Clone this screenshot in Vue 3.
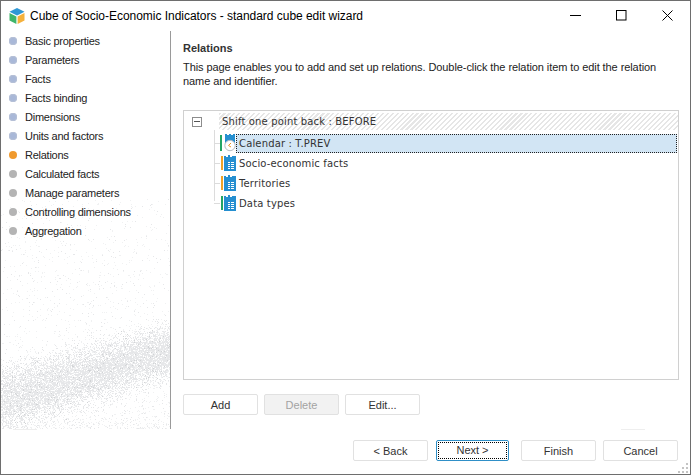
<script setup>
const steps = [
  ['Basic properties', 'done'], ['Parameters', 'done'], ['Facts', 'done'], ['Facts binding', 'done'],
  ['Dimensions', 'done'], ['Units and factors', 'done'], ['Relations', 'active'], ['Calculated facts', 'todo'],
  ['Manage parameters', 'todo'], ['Controlling dimensions', 'todo'], ['Aggregation', 'todo']
]
const rows = [
  ['Socio-economic facts', '#f0a326'], ['Territories', '#f0a326'], ['Data types', '#23a565']
]
let s = 12345
const rnd = () => ((s = (s * 16807) % 2147483647) - 1) / 2147483646
const gauss = () => (rnd() + rnd() + rnd() - 1.5) / 1.5
const paths = { a: '', b: '', c: '' }
const put = (x, y, k) => { paths[k] += `M${Math.round(x)} ${Math.round(y)}h1v1h-1z` }
for (let i = 0; i < 11000; i++) {
  const t = rnd()
  const y = 369 - t * 50 + gauss() * (46 - t * 8)
  const c = rnd()
  put(t * 170, y, c < 0.03 ? 'a' : c < 0.6 ? 'b' : 'c')
}
for (let i = 0; i < 2200; i++) {
  const t = rnd()
  const y = 398 - t * t * 230
  put(rnd() * 170, y, rnd() < 0.25 ? 'b' : 'c')
}
</script>

<template>
  <div class="window">
    <header class="titlebar">
      <svg class="logo" width="18" height="18" viewBox="0 0 18 18">
        <path d="M9 1 16.5 4.8 9 8.6 1.5 4.8Z" fill="#2f97d5" />
        <path d="M1.5 6 8.4 9.6V17L1.5 13.4Z" fill="#3fb56a" />
        <path d="M16.5 6 9.6 9.6V17L16.5 13.4Z" fill="#f5b13c" />
      </svg>
      <span class="title">Cube of Socio-Economic Indicators - standard cube edit wizard</span>
      <div class="controls">
        <svg width="11" height="11" viewBox="0 0 11 11"><path d="M0 5.5H11" stroke="#000" /></svg>
        <svg width="11" height="11" viewBox="0 0 11 11"><rect x=".5" y=".5" width="9.5" height="9.5" fill="none" stroke="#000" /></svg>
        <svg width="11" height="11" viewBox="0 0 11 11"><path d="M.5.5 10.5 10.5M10.5.5.5 10.5" stroke="#000" /></svg>
      </div>
    </header>

    <div class="main">
      <aside class="sidebar">
        <svg class="noise" width="170" height="398" viewBox="0 0 170 398" shape-rendering="crispEdges">
          <path :d="paths.c" fill="#f0f1f2" />
          <path :d="paths.b" fill="#e6e7e9" />
          <path :d="paths.a" fill="#d2d4d6" />
        </svg>
        <ul class="steps">
          <li v-for="step in steps" :key="step[0]" class="step">
            <i class="dot" :class="step[1]"></i>{{ step[0] }}
          </li>
        </ul>
      </aside>

      <section class="content">
        <h1>Relations</h1>
        <p>This page enables you to add and set up relations. Double-click the relation item to edit the relation name and identifier.</p>

        <div class="tree">
          <div class="root">
            <span class="expander"></span>
            <span class="root-label">Shift one point back : BEFORE</span>
          </div>
          <div class="children">
            <div class="row first">
              <i class="bar green"></i>
              <span class="ico">
                <svg width="12" height="18" viewBox="0 0 12 18">
                  <path d="M1 0H3V1H5V0H7V1H9V0H11V14H1Z" fill="#258fd0" />
                  <circle cx="6" cy="11.5" r="5.2" fill="#fff" stroke="#b9bec4" />
                  <path d="M7 9 4.5 11.5 7 13" fill="none" stroke="#e8962a" />
                </svg>
              </span>
              <span class="sel">Calendar : T.PREV</span>
            </div>
            <div v-for="r in rows" :key="r[0]" class="row plain">
              <i class="bar" :style="{ background: r[1] }"></i>
              <span class="ico">
                <svg width="12" height="16" viewBox="0 0 12 16" shape-rendering="crispEdges">
                  <path d="M0 1H2V2H4V0H6V2H8V1H12V16H0Z" fill="#258fd0" />
                  <path d="M4 7H6V8H4ZM7 7H10V8H7ZM4 9H6V10H4ZM7 9H10V10H7ZM4 11H6V12H4ZM7 11H10V12H7ZM4 13H6V14H4ZM7 13H10V14H7Z" fill="#fff" />
                </svg>
              </span>
              <span class="lbl">{{ r[0] }}</span>
            </div>
          </div>
        </div>

        <div class="tree-actions">
          <button>Add</button>
          <button class="disabled">Delete</button>
          <button>Edit...</button>
        </div>
      </section>
    </div>

    <footer class="footer">
      <i class="tick left"></i>
      <i class="tick right"></i>
      <button>&lt; Back</button>
      <button class="default"><span>Next &gt;</span></button>
      <button class="finish">Finish</button>
      <button class="cancel">Cancel</button>
      <svg class="grip" width="11" height="11" viewBox="0 0 11 11" fill="#c4c4c4">
        <rect x="8" y="0" width="2" height="2" />
        <rect x="4" y="4" width="2" height="2" /><rect x="8" y="4" width="2" height="2" />
        <rect x="0" y="8" width="2" height="2" /><rect x="4" y="8" width="2" height="2" /><rect x="8" y="8" width="2" height="2" />
      </svg>
    </footer>
  </div>
</template>

<style>
html, body { margin: 0; background: #fff; }
</style>

<style scoped>
.window {
  position: relative;
  box-sizing: border-box;
  width: 691px;
  height: 475px;
  border: 1px solid #6e6e6e;
  background: #fff;
  display: flex;
  flex-direction: column;
  overflow: hidden;
  font-family: "Liberation Sans", sans-serif;
  font-size: 11px;
  color: #222;
}
.titlebar {
  box-sizing: border-box;
  height: 30px;
  flex: none;
  display: flex;
  align-items: center;
  padding-left: 7px;
  padding-bottom: 1px;
}
.logo { margin-right: 4px; }
.title { font-size: 12px; letter-spacing: -0.03px; color: #000; }
.controls {
  margin-left: auto;
  display: flex;
  gap: 35px;
  padding-right: 17px;
}
.main { flex: 1; display: flex; min-height: 0; }
.sidebar {
  position: relative;
  width: 169px;
  flex: none;
  border-right: 1px solid #9a9a9a;
  overflow: hidden;
}
.noise { position: absolute; left: 0; top: 0; }
.steps {
  position: relative;
  list-style: none;
  margin: 0;
  padding: 0;
}
.step {
  height: 19px;
  display: flex;
  align-items: center;
  padding-left: 8px;
  white-space: nowrap;
  letter-spacing: -0.25px;
  color: #222;
}
.dot {
  width: 8px;
  height: 8px;
  border-radius: 50%;
  margin-right: 8px;
  flex: none;
}
.dot.done { background: #a9b8d8; box-shadow: inset 0 0 0 1px #b6c0d6; }
.dot.active { background: #f09a2e; }
.dot.todo { background: #b4b4b4; }
.content {
  flex: 1;
  min-width: 0;
  padding: 10px 11px 0 12px;
  display: flex;
  flex-direction: column;
}
h1 { margin: 0; font-size: 11px; font-weight: 700; line-height: 14px; color: #333; }
p {
  margin: 5px 0 0;
  line-height: 14px;
  height: 28px;
  color: #222;
  width: 490px;
  letter-spacing: -0.08px;
}
.tree {
  box-sizing: border-box;
  margin-top: 22px;
  height: 270px;
  border: 1px solid #d0d0d0;
  padding: 2px 0 0 8px;
  font-family: "DejaVu Sans", sans-serif;
  font-size: 10px;
  letter-spacing: 0.15px;
  color: #333;
}
.root { height: 17px; display: flex; align-items: center; }
.expander {
  position: relative;
  box-sizing: border-box;
  width: 10px;
  height: 10px;
  border: 1px solid #8c8c8c;
  margin-right: 17px;
  flex: none;
}
.expander::after {
  content: "";
  position: absolute;
  left: 1px;
  right: 1px;
  top: 3px;
  height: 1px;
  background: #555;
}
.root-label {
  flex: 1;
  height: 17px;
  line-height: 17px;
  padding-left: 3px;
  background: repeating-linear-gradient(135deg, #e6e6e6 0 1.5px, #fff 1.5px 3.5px);
}
.children {
  position: relative;
  margin-left: 22px;
  padding-left: 6px;
  padding-top: 3px;
}
.children::before {
  content: "";
  position: absolute;
  left: 0;
  top: 0;
  height: 71px;
  width: 1px;
  background: #dcdcdc;
}
.row {
  position: relative;
  height: 20px;
  display: flex;
  align-items: center;
}
.row::before {
  content: "";
  position: absolute;
  left: -6px;
  top: 10px;
  width: 6px;
  height: 1px;
  background: #dcdcdc;
}
.bar { width: 2px; height: 14px; flex: none; margin-right: 2px; background: #23a565; }
.plain .bar { margin-left: 1px; margin-right: 1px; }
.bar.green { height: 16px; }
.ico { width: 12px; height: 18px; flex: none; display: flex; align-items: center; }
.sel {
  flex: 1;
  box-sizing: border-box;
  height: 19px;
  line-height: 17px;
  padding-left: 2px;
  margin-right: 1px;
  background: #d2e5f4;
  border: 1px dotted #222;
}
.lbl { margin-left: 3px; }
.tree-actions { display: flex; gap: 6px; margin-top: 14px; }
button {
  box-sizing: border-box;
  width: 75px;
  height: 21px;
  padding: 0;
  background: #fff;
  border: 1px solid #e1e1e1;
  border-radius: 2px;
  font-family: "Liberation Sans", sans-serif;
  font-size: 11px;
  color: #333;
}
button.disabled { background: #f2f2f2; color: #a3a3a3; }
.footer {
  position: relative;
  box-sizing: border-box;
  flex: none;
  height: 45px;
  display: flex;
  align-items: flex-start;
  padding: 11px 0 0 352px;
  gap: 8px;
}
.footer .default { width: 73px; }
.footer .finish { margin-left: 4px; }
.footer .cancel { margin-left: -1px; }
button.default { border-color: #2f8fc7; padding: 1px; }
button.default span {
  display: block;
  height: 100%;
  line-height: 15px;
  box-sizing: border-box;
  border: 1px dotted #000;
}
.grip { position: absolute; right: 1px; bottom: 0; }
.tick { position: absolute; top: 0; width: 24px; height: 1px; background: #eee; }
.tick.left { left: 12px; }
.tick.right { left: 620px; }
</style>
